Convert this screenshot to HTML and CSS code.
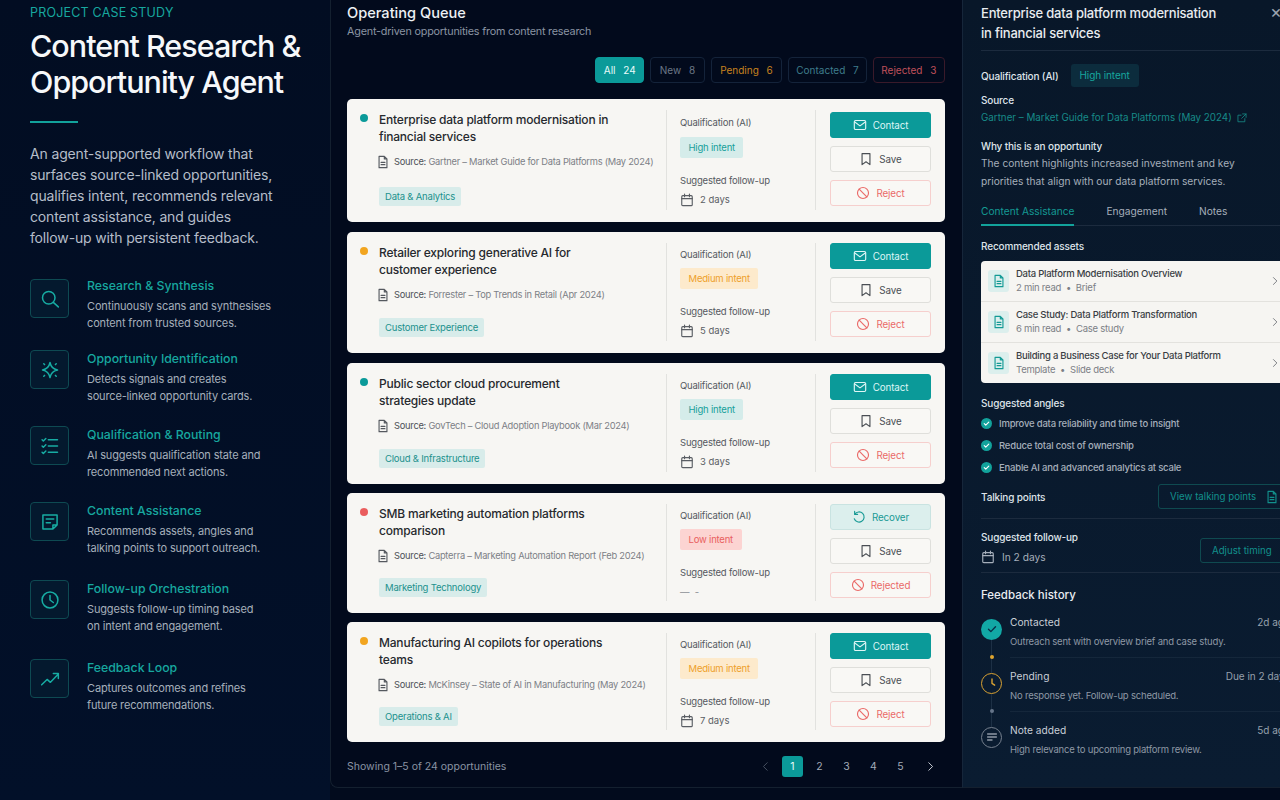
FILE: index.html
```html
<!DOCTYPE html>
<html lang="en">
<head>
    <meta charset="UTF-8">
    <meta name="viewport" content="width=device-width, initial-scale=1.0">
    <title>Content Research &amp; Opportunity Agent</title>
    <link rel="stylesheet" href="styles.css">
</head>
<body>
    <svg class="sprites" width="0" height="0" aria-hidden="true">
        <symbol id="i-doc" viewBox="0 0 16 16"><path d="M3.500 1.500h6l3 3v10h-9z M9.500 1.500v3h3 M5.800 8.500h4.400 M5.800 11h4.400"/></symbol>
        <symbol id="i-cal" viewBox="0 0 16 16"><rect x="2" y="3" width="12" height="11.500" rx="1.200"/><path d="M2 6.500h12 M5.200 1.200v3 M10.800 1.200v3"/></symbol>
        <symbol id="i-mail" viewBox="0 0 16 16"><rect x="1.500" y="2.800" width="13" height="10.400" rx="1.400"/><path d="M2 4.500l6 4.500 6-4.500"/></symbol>
        <symbol id="i-save" viewBox="0 0 16 16"><path d="M3.500 1.800h9v12.600L8 11.200l-4.500 3.200z"/></symbol>
        <symbol id="i-ban" viewBox="0 0 16 16"><circle cx="8" cy="8" r="6.300"/><path d="M3.600 3.600l8.800 8.800"/></symbol>
        <symbol id="i-undo" viewBox="0 0 16 16"><path d="M3.200 4.800A5.800 5.800 0 1 1 2.600 10 M3 1.600v3.400h3.400"/></symbol>
        <symbol id="i-check" viewBox="0 0 16 16"><path d="M4 8.300l2.700 2.700L12 5.500"/></symbol>
        <symbol id="i-next" viewBox="0 0 16 16"><path d="M5.500 2.500L11 8l-5.500 5.500"/></symbol>
        <symbol id="i-prev" viewBox="0 0 16 16"><path d="M10.500 2.500L5 8l5.500 5.500"/></symbol>
    </svg>

    <div class="app">
        <!-- Case study intro -->
        <aside class="intro">
            <div class="eyebrow">PROJECT CASE STUDY</div>
            <h1>Content Research &amp; Opportunity Agent</h1>
            <div class="rule"></div>
            <p class="lede">An agent-supported workflow that surfaces source-linked opportunities, qualifies intent, recommends relevant content assistance, and guides<br>follow-up with persistent feedback.</p>
            <ul class="features">
                <li class="feature">
                    <span class="feature-icon"><svg viewBox="0 0 24 24"><circle cx="10.500" cy="10.500" r="7.500"/><path d="M16 16l6 5.500"/></svg></span>
                    <div><h3>Research &amp; Synthesis</h3><p>Continuously scans and synthesises<br>content from trusted sources.</p></div>
                </li>
                <li class="feature">
                    <span class="feature-icon"><svg viewBox="0 0 24 24"><path d="M12 3c1.100 5.600 3.300 7.900 9 9-5.700 1.100-7.900 3.400-9 9-1.100-5.600-3.300-7.900-9-9 5.700-1.100 7.900-3.400 9-9z"/><path d="M4.500 4.500l1 1 M19.500 4.500l-1 1 M4.500 19.500l1-1 M19.500 19.500l-1-1"/></svg></span>
                    <div><h3>Opportunity Identification</h3><p>Detects signals and creates<br>source-linked opportunity cards.</p></div>
                </li>
                <li class="feature">
                    <span class="feature-icon"><svg viewBox="0 0 24 24"><path d="M10 4.500h11 M10 12h11 M10 19.500h11 M2.500 4.500l1.500 1.500 3-3 M2.500 12l1.500 1.500 3-3 M2.500 19.500L4 21l3-3"/></svg></span>
                    <div><h3>Qualification &amp; Routing</h3><p>AI suggests qualification state and<br>recommended next actions.</p></div>
                </li>
                <li class="feature">
                    <span class="feature-icon"><svg viewBox="0 0 24 24"><path d="M3.500 3.500h17v12l-5 5h-12z M15.500 20.500v-5h5 M7.500 8.500h9 M7.500 13h5"/></svg></span>
                    <div><h3>Content Assistance</h3><p>Recommends assets, angles and<br>talking points to support outreach.</p></div>
                </li>
                <li class="feature">
                    <span class="feature-icon"><svg viewBox="0 0 24 24"><circle cx="12" cy="12" r="9.500"/><path d="M12 6.500V12l4 3"/></svg></span>
                    <div><h3>Follow-up Orchestration</h3><p>Suggests follow-up timing based<br>on intent and engagement.</p></div>
                </li>
                <li class="feature">
                    <span class="feature-icon"><svg viewBox="0 0 24 24"><path d="M2 19l6.500-6.500 4 3.500L21.500 6.500 M16 5.500h6v6"/></svg></span>
                    <div><h3>Feedback Loop</h3><p>Captures outcomes and refines<br>future recommendations.</p></div>
                </li>
            </ul>
        </aside>

        <!-- Queue -->
        <main class="queue">
            <h2>Operating Queue</h2>
            <p class="queue-sub">Agent-driven opportunities from content research</p>
            <div class="filters">
                <button class="filter filter-active">All <b>24</b></button>
                <button class="filter filter-new">New <b>8</b></button>
                <button class="filter filter-pending">Pending <b>6</b></button>
                <button class="filter filter-contacted">Contacted <b>7</b></button>
                <button class="filter filter-rejected">Rejected <b>3</b></button>
            </div>

            <div class="cards">
                <article class="card">
                    <span class="dot dot-high"></span>
                    <div class="card-main">
                        <h4>Enterprise data platform modernisation in financial services</h4>
                        <div class="source"><svg class="icon"><use href="#i-doc"/></svg><span><b>Source:</b> Gartner – Market Guide for Data Platforms (May 2024)</span></div>
                        <span class="tag">Data &amp; Analytics</span>
                    </div>
                    <div class="card-qual">
                        <div class="label">Qualification (AI)</div>
                        <span class="intent intent-high">High intent</span>
                        <div class="label">Suggested follow-up</div>
                        <div class="days"><svg class="icon"><use href="#i-cal"/></svg>2 days</div>
                    </div>
                    <div class="card-actions">
                        <button class="btn btn-primary"><svg class="icon"><use href="#i-mail"/></svg>Contact</button>
                        <button class="btn"><svg class="icon"><use href="#i-save"/></svg>Save</button>
                        <button class="btn btn-danger"><svg class="icon"><use href="#i-ban"/></svg>Reject</button>
                    </div>
                </article>

                <article class="card">
                    <span class="dot dot-medium"></span>
                    <div class="card-main">
                        <h4>Retailer exploring generative AI for customer experience</h4>
                        <div class="source"><svg class="icon"><use href="#i-doc"/></svg><span><b>Source:</b> Forrester – Top Trends in Retail (Apr 2024)</span></div>
                        <span class="tag">Customer Experience</span>
                    </div>
                    <div class="card-qual">
                        <div class="label">Qualification (AI)</div>
                        <span class="intent intent-medium">Medium intent</span>
                        <div class="label">Suggested follow-up</div>
                        <div class="days"><svg class="icon"><use href="#i-cal"/></svg>5 days</div>
                    </div>
                    <div class="card-actions">
                        <button class="btn btn-primary"><svg class="icon"><use href="#i-mail"/></svg>Contact</button>
                        <button class="btn"><svg class="icon"><use href="#i-save"/></svg>Save</button>
                        <button class="btn btn-danger"><svg class="icon"><use href="#i-ban"/></svg>Reject</button>
                    </div>
                </article>

                <article class="card">
                    <span class="dot dot-high"></span>
                    <div class="card-main">
                        <h4>Public sector cloud procurement strategies update</h4>
                        <div class="source"><svg class="icon"><use href="#i-doc"/></svg><span><b>Source:</b> GovTech – Cloud Adoption Playbook (Mar 2024)</span></div>
                        <span class="tag">Cloud &amp; Infrastructure</span>
                    </div>
                    <div class="card-qual">
                        <div class="label">Qualification (AI)</div>
                        <span class="intent intent-high">High intent</span>
                        <div class="label">Suggested follow-up</div>
                        <div class="days"><svg class="icon"><use href="#i-cal"/></svg>3 days</div>
                    </div>
                    <div class="card-actions">
                        <button class="btn btn-primary"><svg class="icon"><use href="#i-mail"/></svg>Contact</button>
                        <button class="btn"><svg class="icon"><use href="#i-save"/></svg>Save</button>
                        <button class="btn btn-danger"><svg class="icon"><use href="#i-ban"/></svg>Reject</button>
                    </div>
                </article>

                <article class="card">
                    <span class="dot dot-low"></span>
                    <div class="card-main">
                        <h4>SMB marketing automation platforms comparison</h4>
                        <div class="source"><svg class="icon"><use href="#i-doc"/></svg><span><b>Source:</b> Capterra – Marketing Automation Report (Feb 2024)</span></div>
                        <span class="tag">Marketing Technology</span>
                    </div>
                    <div class="card-qual">
                        <div class="label">Qualification (AI)</div>
                        <span class="intent intent-low">Low intent</span>
                        <div class="label">Suggested follow-up</div>
                        <div class="days days-none">— &nbsp;-</div>
                    </div>
                    <div class="card-actions">
                        <button class="btn btn-recover"><svg class="icon"><use href="#i-undo"/></svg>Recover</button>
                        <button class="btn"><svg class="icon"><use href="#i-save"/></svg>Save</button>
                        <button class="btn btn-danger"><svg class="icon"><use href="#i-ban"/></svg>Rejected</button>
                    </div>
                </article>

                <article class="card">
                    <span class="dot dot-medium"></span>
                    <div class="card-main">
                        <h4>Manufacturing AI copilots for operations teams</h4>
                        <div class="source"><svg class="icon"><use href="#i-doc"/></svg><span><b>Source:</b> McKinsey – State of AI in Manufacturing (May 2024)</span></div>
                        <span class="tag">Operations &amp; AI</span>
                    </div>
                    <div class="card-qual">
                        <div class="label">Qualification (AI)</div>
                        <span class="intent intent-medium">Medium intent</span>
                        <div class="label">Suggested follow-up</div>
                        <div class="days"><svg class="icon"><use href="#i-cal"/></svg>7 days</div>
                    </div>
                    <div class="card-actions">
                        <button class="btn btn-primary"><svg class="icon"><use href="#i-mail"/></svg>Contact</button>
                        <button class="btn"><svg class="icon"><use href="#i-save"/></svg>Save</button>
                        <button class="btn btn-danger"><svg class="icon"><use href="#i-ban"/></svg>Reject</button>
                    </div>
                </article>
            </div>

            <div class="pager">
                <span class="pager-text">Showing 1–5 of 24 opportunities</span>
                <div class="pages">
                    <svg class="icon page-arrow page-arrow-off"><use href="#i-prev"/></svg>
                    <span class="page page-current">1</span>
                    <span class="page">2</span>
                    <span class="page">3</span>
                    <span class="page">4</span>
                    <span class="page">5</span>
                    <svg class="icon page-arrow page-arrow-next"><use href="#i-next"/></svg>
                </div>
            </div>
        </main>

        <!-- Detail panel -->
        <section class="detail">
            <div class="detail-head">
                <h2>Enterprise data platform modernisation in financial services</h2>
                <span class="close">×</span>
            </div>
            <div class="qual-row"><span class="strong">Qualification (AI)</span><span class="chip">High intent</span></div>
            <div class="strong source-label">Source</div>
            <div class="source-link">Gartner – Market Guide for Data Platforms (May 2024)
                <svg class="icon" viewBox="0 0 16 16"><path d="M12.500 9v5h-11V3.500h5 M9 1.500h5.500V7 M14.500 1.500L7.500 8.500"/></svg>
            </div>
            <div class="strong why">Why this is an opportunity</div>
            <p class="why-text">The content highlights increased investment and key priorities that align with our data platform services.</p>

            <div class="tabs">
                <span class="tab tab-active">Content Assistance</span>
                <span class="tab">Engagement</span>
                <span class="tab">Notes</span>
            </div>

            <div class="strong assets-label">Recommended assets</div>
            <div class="assets">
                <div class="asset">
                    <span class="asset-icon"><svg class="icon"><use href="#i-doc"/></svg></span>
                    <div class="asset-text"><div class="asset-title">Data Platform Modernisation Overview</div><div class="asset-meta">2 min read &nbsp;•&nbsp; Brief</div></div>
                    <svg class="icon asset-arrow"><use href="#i-next"/></svg>
                </div>
                <div class="asset">
                    <span class="asset-icon"><svg class="icon"><use href="#i-doc"/></svg></span>
                    <div class="asset-text"><div class="asset-title">Case Study: Data Platform Transformation</div><div class="asset-meta">6 min read &nbsp;•&nbsp; Case study</div></div>
                    <svg class="icon asset-arrow"><use href="#i-next"/></svg>
                </div>
                <div class="asset">
                    <span class="asset-icon"><svg class="icon"><use href="#i-doc"/></svg></span>
                    <div class="asset-text"><div class="asset-title">Building a Business Case for Your Data Platform</div><div class="asset-meta">Template &nbsp;•&nbsp; Slide deck</div></div>
                    <svg class="icon asset-arrow"><use href="#i-next"/></svg>
                </div>
            </div>

            <div class="strong angles-label">Suggested angles</div>
            <ul class="angles">
                <li><span class="tick"><svg class="icon"><use href="#i-check"/></svg></span>Improve data reliability and time to insight</li>
                <li><span class="tick"><svg class="icon"><use href="#i-check"/></svg></span>Reduce total cost of ownership</li>
                <li><span class="tick"><svg class="icon"><use href="#i-check"/></svg></span>Enable AI and advanced analytics at scale</li>
            </ul>

            <div class="split talking">
                <span class="strong">Talking points</span>
                <button class="outline outline-talk">View talking points <svg class="icon"><use href="#i-doc"/></svg></button>
            </div>

            <div class="split followup">
                <div>
                    <div class="strong">Suggested follow-up</div>
                    <div class="followup-days"><svg class="icon"><use href="#i-cal"/></svg>In 2 days</div>
                </div>
                <button class="outline outline-adjust">Adjust timing</button>
            </div>

            <h5>Feedback history</h5>
            <div class="history">
                <div class="event">
                    <span class="badge badge-done"><svg class="icon"><use href="#i-check"/></svg></span>
                    <div class="event-body">
                        <div class="event-top"><span>Contacted</span><time>2d ago</time></div>
                        <p>Outreach sent with overview brief and case study.</p>
                    </div>
                    <span class="link-dot link-dot-pending"></span>
                </div>
                <div class="event">
                    <span class="badge badge-pending"><svg class="icon" viewBox="0 0 16 16"><path d="M8 3.500V8.500l3 2"/></svg></span>
                    <div class="event-body">
                        <div class="event-top"><span>Pending</span><time>Due in 2 days</time></div>
                        <p>No response yet. Follow-up scheduled.</p>
                    </div>
                    <span class="link-dot"></span>
                </div>
                <div class="event">
                    <span class="badge badge-note"><svg class="icon" viewBox="0 0 16 16"><path d="M3 4.500h10 M3 8h10 M3 11.500h5"/></svg></span>
                    <div class="event-body">
                        <div class="event-top"><span>Note added</span><time>5d ago</time></div>
                        <p>High relevance to upcoming platform review.</p>
                    </div>
                </div>
            </div>
        </section>
    </div>
</body>
</html>
```

FILE: styles.css
```css
* {
    box-sizing: border-box;
}
html, body {
    height: 100%;
}
body {
    margin: 0;
    background-color: #020b1d;
    font-family: 'Inter', 'Liberation Sans', sans-serif;
    overflow: hidden;
}
h1, h2, h3, h4, h5, p, ul {
    margin: 0;
    padding: 0;
    font-weight: 500;
}
ul {
    list-style: none;
}
button {
    font-family: inherit;
}
.sprites {
    position: absolute;
}
.icon {
    width: 14px;
    height: 14px;
    fill: none;
    stroke: currentColor;
    stroke-width: 1.3;
    stroke-linejoin: round;
    stroke-linecap: round;
    flex-shrink: 0;
}
.app {
    display: grid;
    grid-template-columns: 330px 632px 340px;
    width: 1302px;
    height: 800px;
}

/* Intro */
.intro {
    padding: 5px 0 0 30px;
    background: linear-gradient(180deg, #020d22 0%, #021029 100%);
}
.eyebrow {
    color: #17a79f;
    font-size: 12.500px;
    line-height: 16px;
    letter-spacing: 0.2px;
}
.intro h1 {
    margin-top: 7px;
    color: #f6f8fa;
    font-size: 30.500px;
    line-height: 36px;
    letter-spacing: -1px;
}
.rule {
    width: 48px;
    height: 2px;
    margin-top: 21px;
    background-color: #12a29b;
}
.lede {
    width: 250px;
    margin-top: 20px;
    color: #b5bdc9;
    font-size: 14px;
    line-height: 21px;
    letter-spacing: -0.15px;
    font-weight: 400;
}
.features {
    margin-top: 31px;
}
.feature {
    display: flex;
    gap: 18px;
    margin-bottom: 21px;
}
.feature:first-child {
    margin-bottom: 18px;
}
.feature:nth-child(4) {
    margin-bottom: 23px;
}
.feature:nth-child(5) {
    margin-bottom: 24px;
}
.feature-icon {
    display: flex;
    align-items: center;
    justify-content: center;
    width: 39px;
    height: 39px;
    border: 1px solid #0e4a52;
    border-radius: 4px;
    background-color: #04192e;
    color: #17aca3;
}
.feature-icon svg {
    width: 20px;
    height: 20px;
    fill: none;
    stroke: currentColor;
    stroke-width: 1.800;
    stroke-linecap: round;
    stroke-linejoin: round;
}
.feature h3 {
    padding-top: 2px;
    color: #17a79f;
    font-size: 12.300px;
    line-height: 14px;
    margin-bottom: 5px;
}
.feature:first-child h3 {
    padding-top: 0;
}
.feature p {
    color: #a6afbb;
    font-size: 11px;
    line-height: 17px;
    letter-spacing: -0.15px;
    font-weight: 400;
    white-space: nowrap;
}

/* Queue */
.queue {
    position: relative;
    height: 788px;
    padding: 0 17px 0 16px;
    background-color: #020a1c;
    border-left: 1px solid #14202f;
    border-bottom: 1px solid #14202f;
    border-bottom-left-radius: 8px;
}
.queue h2 {
    padding-top: 4px;
    color: #eef1f4;
    font-size: 14.600px;
    line-height: 18px;
}
.queue-sub {
    margin-top: 3px;
    color: #8a94a3;
    font-size: 10.800px;
    line-height: 14px;
    letter-spacing: -0.2px;
    font-weight: 400;
}
.filters {
    display: flex;
    justify-content: flex-end;
    gap: 5.500px;
    margin-top: 18px;
}
.filter {
    height: 26px;
    padding: 0 7.500px;
    border: 1px solid #14233a;
    border-radius: 4px;
    background: none;
    font-size: 10px;
    white-space: nowrap;
}
.filter b {
    font-weight: 400;
    margin-left: 5px;
}
.filter-active {
    border-color: #0b9a99;
    background-color: #0b9a99;
    color: #e8fbfa;
}
.filter-new {
    padding: 0 9px;
    color: #6d7887;
}
.filter-pending {
    padding: 0 8.500px;
    color: #c8821e;
}
.filter-contacted {
    color: #3f7d8c;
}
.filter-rejected {
    border-color: #3a1a2a;
    color: #c0505a;
}
.cards {
    display: flex;
    flex-direction: column;
    gap: 10px;
    margin-top: 16px;
}
.card {
    display: flex;
    height: 121px;
    padding: 11px 14px 12px 13px;
    border-radius: 5px;
    background-color: #f7f6f3;
}
.card:first-child {
    height: 123px;
}
.card:nth-child(4) {
    height: 120px;
    margin-top: -1px;
}
.card:nth-child(5) {
    height: 120px;
    margin-top: -1px;
}
.dot {
    width: 8px;
    height: 8px;
    margin: 4px 11px 0 0;
    border-radius: 50%;
    flex-shrink: 0;
}
.dot-high {
    background-color: #0b9a99;
}
.dot-medium {
    background-color: #f2a51f;
}
.dot-low {
    background-color: #ea5d5d;
}
.card-main {
    width: 287px;
    padding: 1px 10px 0 0;
    display: flex;
    flex-direction: column;
    align-items: flex-start;
}
.card-main h4 {
    width: 232px;
    color: #26292e;
    font-size: 12px;
    line-height: 17px;
    letter-spacing: -0.2px;
}
.source {
    display: flex;
    align-items: center;
    gap: 4px;
    margin-top: 10px;
    color: #7c8086;
    font-size: 9.300px;
    line-height: 14px;
    letter-spacing: -0.25px;
    white-space: nowrap;
}
.source b {
    font-weight: 400;
    color: #4d5157;
}
.source .icon {
    margin-left: -3px;
    color: #55595f;
}
.tag {
    margin-top: auto;
    margin-bottom: 4px;
    padding: 3px 6px;
    border-radius: 2px;
    background-color: #d8ecea;
    color: #1c918d;
    font-size: 9.500px;
    line-height: 13px;
    letter-spacing: -0.2px;
}
.card-qual {
    width: 149px;
    padding-left: 13px;
    border-left: 1px solid #e2e2df;
}
.card:first-child .card-qual {
    padding-top: 1px;
}
.label {
    margin-top: 5px;
    color: #55595f;
    font-size: 9.500px;
    line-height: 13px;
    letter-spacing: -0.2px;
}
.intent {
    display: inline-block;
    margin: 7px 0 11px;
    padding: 3px 8.500px;
    border-radius: 2px;
    font-size: 9.500px;
    line-height: 15px;
    letter-spacing: -0.2px;
}
.card:first-child .intent {
    margin-top: 8px;
}
.intent-high {
    background-color: #d5ecea;
    color: #17a09b;
}
.intent-medium {
    background-color: #fdeacc;
    color: #eea02a;
}
.intent-low {
    background-color: #fcd4d2;
    color: #e9605f;
}
.days {
    display: flex;
    align-items: center;
    gap: 6px;
    margin-top: 6px;
    color: #5a5e64;
    font-size: 9.500px;
    line-height: 14px;
}
.days-none {
    color: #8a8e94;
}
.card-actions {
    display: flex;
    flex-direction: column;
    gap: 8px;
    flex: 1;
    padding-left: 14px;
    border-left: 1px solid #e2e2df;
}
.card:first-child .btn:first-child {
    margin-top: 2px;
}
.btn {
    display: flex;
    align-items: center;
    justify-content: center;
    gap: 6px;
    height: 26px;
    border: 1px solid #dfdfdb;
    border-radius: 3px;
    background-color: #f9f8f5;
    color: #4a4e54;
    font-size: 9.800px;
    letter-spacing: -0.1px;
}
.btn-primary {
    border-color: #0b9a99;
    background-color: #0b9a99;
    color: #dff6f5;
}
.btn-danger {
    border-color: #f6cfcd;
    color: #ea6a68;
}
.btn-recover {
    border-color: #c9e3e1;
    background-color: #dcefed;
    color: #199a95;
}

/* Pagination */
.pager {
    position: absolute;
    left: 16px;
    right: 17px;
    top: 756px;
    display: flex;
    align-items: center;
    justify-content: space-between;
}
.pager-text {
    color: #8a94a3;
    font-size: 10.500px;
}
.pages {
    display: flex;
    align-items: center;
    gap: 6px;
    padding-right: 7px;
}
.page {
    width: 21px;
    height: 21px;
    line-height: 21px;
    text-align: center;
    color: #a3acb8;
    font-size: 10.500px;
}
.page-current {
    border-radius: 3px;
    background-color: #0b9a99;
    color: #e8fbfa;
}
.page-arrow {
    width: 11px;
    height: 11px;
    margin: 0 5px;
    color: #e0e4ea;
}
.page-arrow-next {
    margin: 0 2px 0 8px;
}
.page-arrow-off {
    color: #4d5867;
}

/* Detail panel */
.detail {
    height: 788px;
    padding: 4px 0 0 18px;
    background: linear-gradient(180deg, #081729 0%, #0a1c31 100%);
    border-left: 1px solid #16263a;
    border-bottom: 1px solid #14202f;
    color: #dfe4ea;
}
.detail-head {
    position: relative;
    height: 47px;
    border-bottom: 1px solid #1c2b3e;
}
.detail-head h2 {
    width: 245px;
    color: #e9ecf0;
    font-size: 13px;
    line-height: 19.500px;
    letter-spacing: -0.2px;
}
.close {
    position: absolute;
    right: 20px;
    top: -3px;
    color: #9aa3af;
    font-size: 18px;
}
.strong {
    color: #dfe4ea;
    font-size: 10px;
    line-height: 14px;
    letter-spacing: -0.15px;
    font-weight: 500;
}
.qual-row {
    display: flex;
    align-items: center;
    gap: 12px;
    margin-top: 13px;
}
.chip {
    padding: 4px 9px;
    border-radius: 3px;
    background-color: #0c2c3d;
    color: #17a79f;
    font-size: 10px;
    line-height: 15px;
    letter-spacing: -0.1px;
}
.source-label {
    margin-top: 6px;
}
.source-link {
    display: flex;
    align-items: center;
    gap: 5px;
    margin-top: 4px;
    color: #178a88;
    font-size: 9.800px;
    line-height: 14px;
}
.source-link .icon {
    width: 10px;
    height: 10px;
}
.why {
    margin-top: 14px;
}
.why-text {
    width: 270px;
    margin-top: 2px;
    color: #a6afbb;
    font-size: 10.200px;
    line-height: 17.500px;
    font-weight: 400;
}
.tabs {
    display: flex;
    gap: 32px;
    margin-top: 7px;
    height: 29px;
    border-bottom: 1px solid #1c2b3e;
}
.tab {
    height: 29px;
    color: #a6afbb;
    font-size: 10.200px;
    line-height: 28px;
}
.tab-active {
    border-bottom: 2px solid #12a29b;
    color: #149a94;
}
.assets-label {
    margin-top: 13px;
}
.assets {
    margin-top: 8px;
    border-radius: 4px 0 0 4px;
    background-color: #f6f5f2;
}
.asset {
    display: flex;
    align-items: center;
    height: 41px;
    padding: 0 22px 0 7px;
    border-bottom: 1px solid #e3e2de;
}
.asset:last-child {
    height: 40px;
    border-bottom: 0;
}
.asset-icon {
    display: flex;
    align-items: center;
    justify-content: center;
    width: 21px;
    height: 22px;
    border-radius: 3px;
    background-color: #dcefed;
    color: #139a95;
}
.asset-text {
    flex: 1;
    margin-left: 7px;
    font-size: 9.500px;
    line-height: 14px;
    letter-spacing: -0.25px;
}
.asset-title {
    color: #3a3e44;
    font-weight: 500;
}
.asset-meta {
    color: #7c8086;
}
.asset-arrow {
    width: 10px;
    height: 10px;
    color: #62666c;
}
.angles-label {
    margin-top: 13px;
}
.angles {
    margin-top: 2px;
}
.angles li {
    display: flex;
    align-items: center;
    gap: 7px;
    height: 22px;
    color: #a6afbb;
    font-size: 9.500px;
    letter-spacing: -0.2px;
}
.tick {
    display: flex;
    align-items: center;
    justify-content: center;
    width: 11px;
    height: 11px;
    border-radius: 50%;
    background-color: #12a29b;
    color: #fff;
}
.tick .icon {
    width: 9px;
    height: 9px;
    stroke-width: 2;
}
.split {
    display: flex;
    align-items: center;
    justify-content: space-between;
    padding-right: 20px;
}
.talking {
    height: 35px;
    margin-top: 5.500px;
    padding-bottom: 8px;
    border-bottom: 1px solid #1c2b3e;
}
.outline {
    display: flex;
    align-items: center;
    height: 25px;
    border: 1px solid #0f4a50;
    border-radius: 3px;
    background: none;
    color: #12908c;
    font-size: 9.700px;
    white-space: nowrap;
}
.outline-talk {
    width: 132px;
    margin-right: -8px;
    padding: 0 11px;
    gap: 9px;
    justify-content: flex-start;
}
.outline-adjust {
    width: 90px;
    margin-top: 6px;
    margin-right: -8px;
    padding: 0 11px;
}
.followup {
    height: 54px;
    padding-top: 4px;
    border-bottom: 1px solid #1c2b3e;
}
.followup-days {
    display: flex;
    align-items: center;
    gap: 7px;
    margin-top: 6px;
    color: #a6afbb;
    font-size: 10.200px;
}
.detail h5 {
    margin-top: 15px;
    color: #e9ecf0;
    font-size: 11.500px;
    line-height: 14px;
}
.history {
    margin-top: 13px;
    padding-right: 20px;
}
.event {
    position: relative;
    display: flex;
    gap: 8px;
    height: 54px;
}
.badge {
    display: flex;
    align-items: center;
    justify-content: center;
    width: 21px;
    height: 21px;
    margin-top: 4px;
    border-radius: 50%;
    flex-shrink: 0;
}
.badge .icon {
    stroke-width: 1.600;
}
.badge-done {
    background-color: #12a8a5;
    color: #083148;
}
.badge-pending {
    border: 1.500px solid #d9a233;
    color: #d9a233;
}
.badge-note {
    border: 1px solid #77818f;
    color: #8e98a5;
}
.event-body {
    flex: 1;
    height: 43px;
    border-bottom: 1px solid #15273b;
}
.event:last-child .event-body {
    border-bottom: 0;
}
.event-top {
    display: flex;
    justify-content: space-between;
    color: #c9cfd7;
    font-size: 10.200px;
    line-height: 14px;
}
.event-top time {
    color: #95a0ad;
    font-size: 10px;
    margin-right: -8px;
}
.event p {
    margin-top: 6px;
    color: #8e98a5;
    font-size: 9.500px;
    line-height: 14px;
    letter-spacing: -0.2px;
    font-weight: 400;
}
/* connector between two timeline badges */
.event:not(:last-child)::after {
    content: "";
    position: absolute;
    left: 10px;
    top: 25px;
    width: 1px;
    height: 33px;
    background-color: #1d3045;
}
.link-dot {
    position: absolute;
    left: 8.500px;
    top: 40.500px;
    z-index: 1;
    width: 4px;
    height: 4px;
    border-radius: 50%;
    background-color: #66758a;
}
.link-dot-pending {
    background-color: #e0a52f;
}
```
